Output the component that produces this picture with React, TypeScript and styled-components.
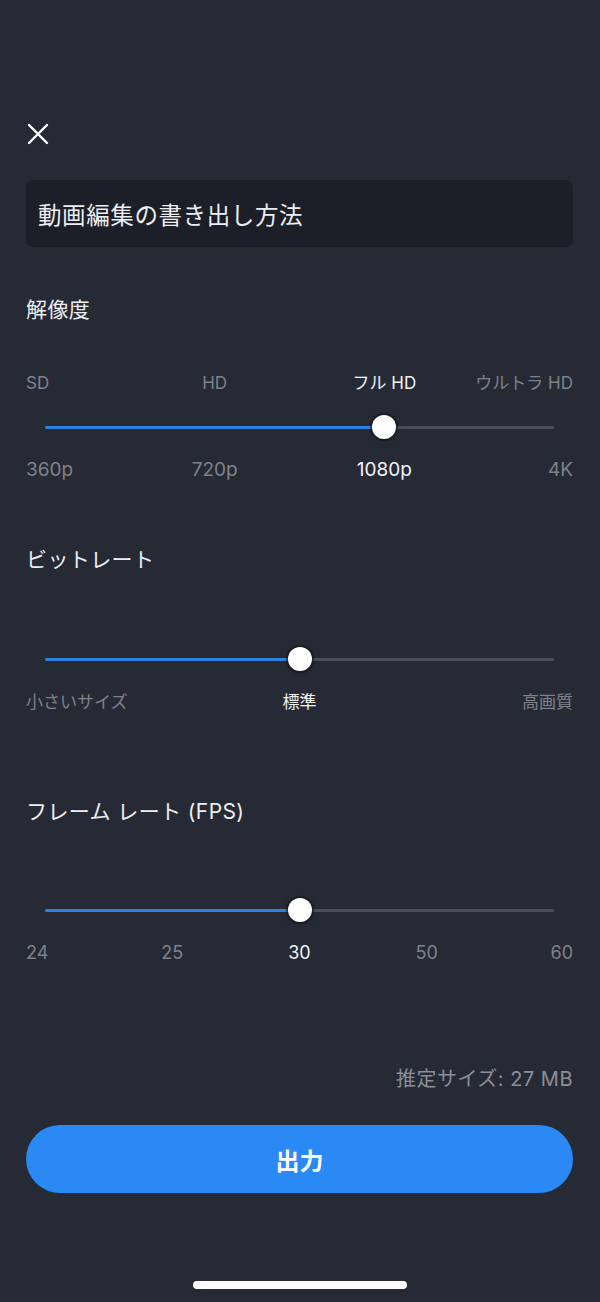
import React from "react";
import styled, { createGlobalStyle } from "styled-components";

const GlobalStyle = createGlobalStyle`
  html, body {
    margin: 0;
    padding: 0;
    background: #262a35;
  }
  body {
    font-family: "Inter", "Noto Sans CJK JP", sans-serif;
    -webkit-font-smoothing: antialiased;
  }
  * { box-sizing: border-box; }
`;

const Page = styled.div`
  width: 600px;
  min-height: 1302px;
  background: #262a35;
  padding: 123px 27px 13px 26px;
  display: flex;
  flex-direction: column;
  color: #eceef2;
`;

const CloseButton = styled.button`
  width: 22px;
  height: 22px;
  margin-left: 1px;
  padding: 0;
  border: none;
  background: transparent;
  display: flex;
  cursor: pointer;
`;

const TitleField = styled.div`
  margin-top: 35px;
  height: 67px;
  background: #1c1f27;
  border-radius: 7px;
  display: flex;
  align-items: center;
  padding: 0 12px;
  font-size: 23.5px;
  color: #eceef2;
  letter-spacing: 0.6px;
`;

const Section = styled.section<{ $top: number }>`
  margin-top: ${(p) => p.$top}px;
  display: flex;
  flex-direction: column;
`;

const Heading = styled.h2<{ $gap: number }>`
  margin: 0 0 ${(p) => p.$gap}px;
  height: 30px;
  line-height: 30px;
  font-size: 21px;
  font-weight: 400;
  letter-spacing: 0.4px;
  color: #eceef2;
`;

const LabelRow = styled.div<{ $n: number; $size: number }>`
  display: grid;
  grid-template-columns:
    calc(19px + (100% - 38px) / ${(p) => (p.$n - 1) * 2})
    repeat(${(p) => p.$n - 2}, calc((100% - 38px) / ${(p) => p.$n - 1}))
    1fr;
  height: 24px;
  line-height: 24px;
  font-size: ${(p) => p.$size}px;
  font-weight: 400;
`;

const Label = styled.span<{ $active: boolean; $align: string }>`
  justify-self: ${(p) => p.$align};
  white-space: nowrap;
  color: ${(p) => (p.$active ? "#f2f3f5" : "#7e828b")};
`;

const SliderRow = styled.div<{ $mt: number; $mb: number }>`
  position: relative;
  height: 24px;
  margin: ${(p) => p.$mt}px 19px ${(p) => p.$mb}px;
  display: flex;
  align-items: center;
`;

const Track = styled.div<{ $pct: number }>`
  flex: 1;
  height: 3px;
  border-radius: 2px;
  background: linear-gradient(
    to right,
    #2f80e4 0%,
    #2f80e4 ${(p) => p.$pct}%,
    #4a4e57 ${(p) => p.$pct}%,
    #4a4e57 100%
  );
`;

const Thumb = styled.div`
  position: absolute;
  top: 0;
  width: 24px;
  height: 24px;
  margin-left: -12px;
  border-radius: 50%;
  background: #ffffff;
  box-shadow: 0 0 0 2px rgba(20, 22, 28, 0.55), 0 1px 4px rgba(0, 0, 0, 0.4);
`;

const Estimate = styled.div`
  margin-top: 101px;
  height: 26px;
  line-height: 26px;
  text-align: right;
  font-size: 20px;
  letter-spacing: 0.5px;
  color: #8b8f98;
`;

const ExportButton = styled.button`
  margin-top: 33px;
  height: 68px;
  border: none;
  border-radius: 34px;
  background: #2a89f5;
  color: #ffffff;
  font-family: "Noto Sans CJK JP", sans-serif;
  font-size: 24px;
  font-weight: 700;
  cursor: pointer;
`;

const HomeIndicator = styled.div`
  margin: 88px auto 0;
  width: 214px;
  height: 8px;
  border-radius: 4px;
  background: #ffffff;
`;

type SliderProps = {
  heading: string;
  headingGap: number;
  top: number;
  topLabels?: string[];
  bottomLabels: string[];
  value: number;
  labelSize: number;
  sliderTop: number;
};

function LabelLine({ labels, value, size }: { labels: string[]; value: number; size: number }) {
  return (
    <LabelRow $n={labels.length} $size={size}>
      {labels.map((l, i) => (
        <Label
          key={l}
          $active={i === value}
          $align={i === 0 ? "start" : i === labels.length - 1 ? "end" : "center"}
        >
          {l}
        </Label>
      ))}
    </LabelRow>
  );
}

function SettingSlider({
  heading,
  headingGap,
  top,
  topLabels,
  bottomLabels,
  value,
  labelSize,
  sliderTop,
}: SliderProps) {
  const pct = (value / (bottomLabels.length - 1)) * 100;
  return (
    <Section $top={top}>
      <Heading $gap={headingGap}>{heading}</Heading>
      {topLabels && <LabelLine labels={topLabels} value={value} size={17} />}
      <SliderRow $mt={sliderTop} $mb={19}>
        <Track $pct={pct} />
        <Thumb style={{ left: `${pct}%` }} />
      </SliderRow>
      <LabelLine labels={bottomLabels} value={value} size={labelSize} />
    </Section>
  );
}

export default function App() {
  return (
    <>
      <GlobalStyle />
      <Page>
        <CloseButton aria-label="閉じる">
          <svg width="22" height="22" viewBox="0 0 22 22">
            <path
              d="M2 2 L20 20 M20 2 L2 20"
              stroke="#ffffff"
              strokeWidth="2.4"
              strokeLinecap="round"
              fill="none"
            />
          </svg>
        </CloseButton>
        <TitleField>動画編集の書き出し方法</TitleField>
        <SettingSlider
          heading="解像度"
          headingGap={46}
          top={48}
          topLabels={["SD", "HD", "フル HD", "ウルトラ HD"]}
          bottomLabels={["360p", "720p", "1080p", "4K"]}
          value={2}
          labelSize={19}
          sliderTop={20}
        />
        <SettingSlider
          heading="ビットレート"
          headingGap={0}
          top={63}
          bottomLabels={["小さいサイズ", "標準", "高画質"]}
          value={1}
          labelSize={17}
          sliderTop={72}
        />
        <SettingSlider
          heading="フレーム レート (FPS)"
          headingGap={0}
          top={83}
          bottomLabels={["24", "25", "30", "50", "60"]}
          value={2}
          labelSize={18}
          sliderTop={71}
        />
        <Estimate>推定サイズ: 27 MB</Estimate>
        <ExportButton>出力</ExportButton>
        <HomeIndicator />
      </Page>
    </>
  );
}
